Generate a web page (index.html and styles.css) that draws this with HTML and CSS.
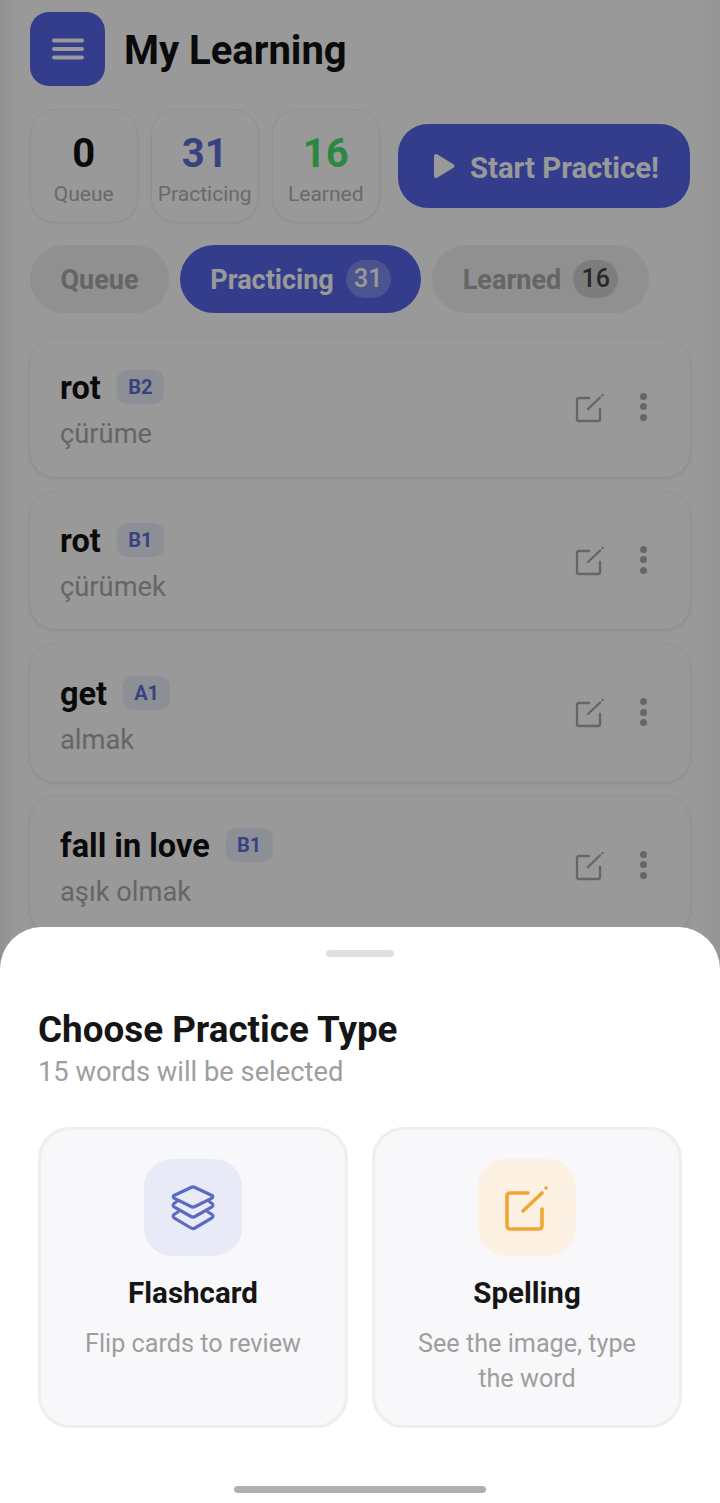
FILE: index.html
```html
<!DOCTYPE html>
<html lang="en">
<head>
  <meta charset="UTF-8">
  <meta name="viewport" content="width=device-width, initial-scale=1.0">
  <title>My Learning</title>
  <link rel="stylesheet" href="styles.css">
</head>
<body>

  <main class="page">
    <header class="top">
      <button class="menu-btn" aria-label="Menu">
        <svg width="32" height="24" viewBox="0 0 32 24"><path d="M2 3.500h28M2 12h28M2 20.500h28" stroke="#fff" stroke-width="4" stroke-linecap="round"/></svg>
      </button>
      <h1>My Learning</h1>
    </header>

    <section class="summary">
      <div class="stat"><strong>0</strong><span>Queue</span></div>
      <div class="stat"><strong class="blue">31</strong><span>Practicing</span></div>
      <div class="stat"><strong class="green">16</strong><span>Learned</span></div>
      <button class="start-btn">
        <svg width="22" height="26" viewBox="0 0 22 26"><path d="M1 3v20a2 2 0 0 0 3 1.700l16.500-10a2 2 0 0 0 0-3.400L4 1.300A2 2 0 0 0 1 3z" fill="#fff"/></svg>
        <span>Start Practice!</span>
      </button>
    </section>

    <nav class="tabs">
      <div class="tab tab-queue">Queue</div>
      <div class="tab tab-practicing active">Practicing <span class="count">31</span></div>
      <div class="tab tab-learned">Learned <span class="count">16</span></div>
    </nav>

    <section class="words">
      <article class="word">
        <div class="word-text">
          <div class="word-head"><b>rot</b><span class="level">B2</span></div>
          <p>çürüme</p>
        </div>
        <svg class="edit" width="30" height="30" viewBox="0 0 30 30"><path d="M14 4H4a2 2 0 0 0-2 2v19a2 2 0 0 0 2 2h19a2 2 0 0 0 2-2V15M13 15L25 3.500M27.500 1v0" fill="none" stroke="#aaa" stroke-width="2.400" stroke-linecap="round"/></svg>
        <span class="dots"><i></i><i></i><i></i></span>
      </article>
      <article class="word">
        <div class="word-text">
          <div class="word-head"><b>rot</b><span class="level">B1</span></div>
          <p>çürümek</p>
        </div>
        <svg class="edit" width="30" height="30" viewBox="0 0 30 30"><path d="M14 4H4a2 2 0 0 0-2 2v19a2 2 0 0 0 2 2h19a2 2 0 0 0 2-2V15M13 15L25 3.500M27.500 1v0" fill="none" stroke="#aaa" stroke-width="2.400" stroke-linecap="round"/></svg>
        <span class="dots"><i></i><i></i><i></i></span>
      </article>
      <article class="word">
        <div class="word-text">
          <div class="word-head"><b>get</b><span class="level">A1</span></div>
          <p>almak</p>
        </div>
        <svg class="edit" width="30" height="30" viewBox="0 0 30 30"><path d="M14 4H4a2 2 0 0 0-2 2v19a2 2 0 0 0 2 2h19a2 2 0 0 0 2-2V15M13 15L25 3.500M27.500 1v0" fill="none" stroke="#aaa" stroke-width="2.400" stroke-linecap="round"/></svg>
        <span class="dots"><i></i><i></i><i></i></span>
      </article>
      <article class="word">
        <div class="word-text">
          <div class="word-head"><b>fall in love</b><span class="level">B1</span></div>
          <p>aşık olmak</p>
        </div>
        <svg class="edit" width="30" height="30" viewBox="0 0 30 30"><path d="M14 4H4a2 2 0 0 0-2 2v19a2 2 0 0 0 2 2h19a2 2 0 0 0 2-2V15M13 15L25 3.500M27.500 1v0" fill="none" stroke="#aaa" stroke-width="2.400" stroke-linecap="round"/></svg>
        <span class="dots"><i></i><i></i><i></i></span>
      </article>
    </section>
  </main>

  <div class="scrim"></div>

  <aside class="sheet">
    <div class="handle"></div>
    <h2>Choose Practice Type</h2>
    <p class="sub">15 words will be selected</p>
    <div class="options">
      <div class="option">
        <div class="option-icon icon-blue">
          <svg width="46" height="46" viewBox="0 0 46 46" fill="none" stroke="#5c6bc0" stroke-width="3.200" stroke-linejoin="round" stroke-linecap="round"><path d="M21 2.500a4 4 0 0 1 4 0L42 10.500a1.500 1.500 0 0 1 0 2.600L25 21.500a4 4 0 0 1-4 0L4 13.100a1.500 1.500 0 0 1 0-2.600z"/><path d="M8 15.500L4 18.500a2 2 0 0 0 0 3.300L21 31.500a4 4 0 0 0 4 0L42 21.800a2 2 0 0 0 0-3.300L38 15.500"/><path d="M8 27L4 29.500a2 2 0 0 0 0 3.300L21 43a4 4 0 0 0 4 0L42 32.800a2 2 0 0 0 0-3.300L38 27"/></svg>
        </div>
        <h3>Flashcard</h3>
        <p>Flip cards to review</p>
      </div>
      <div class="option">
        <div class="option-icon icon-orange">
          <svg width="46" height="46" viewBox="0 0 46 46" fill="none" stroke="#f2a533" stroke-width="3.600" stroke-linecap="round"><path d="M24 8H6a3 3 0 0 0-3 3v30a3 3 0 0 0 3 3h29a3 3 0 0 0 3-3V24M19 26L38 8M42 3v0"/></svg>
        </div>
        <h3>Spelling</h3>
        <p>See the image, type the word</p>
      </div>
    </div>
    <div class="home-bar"></div>
  </aside>

</body>
</html>
```

FILE: styles.css
```css
* {
  box-sizing: border-box;
}

html, body {
  margin: 0;
  padding: 0;
  height: 1503px;
  overflow: hidden;
}

body {
  position: relative;
  font-family: Roboto, "Liberation Sans", sans-serif;
  background-color: #ffffff;
  color: #111;
}

.page {
  padding: 12px 30px 0;
}

.top {
  display: flex;
  align-items: center;
  gap: 19px;
}

.menu-btn {
  display: flex;
  align-items: center;
  justify-content: center;
  width: 75px;
  height: 74px;
  padding: 0;
  border: 0;
  border-radius: 19px;
  background-color: #5566e8;
}

h1 {
  margin: 0;
  padding-top: 3px;
  font-size: 40px;
  font-weight: 700;
}

.summary {
  display: flex;
  align-items: center;
  margin-top: 23px;
}

.stat {
  display: flex;
  flex-direction: column;
  align-items: center;
  width: 107.500px;
  height: 114px;
  margin-right: 13.500px;
  padding-top: 21px;
  border: 1.500px solid #f0f0f0;
  border-radius: 26px;
  background-color: #fff;
  box-shadow: 0 1px 3px rgba(0, 0, 0, 0.05);
}

.stat strong {
  font-size: 40px;
  line-height: 46px;
}

.stat span {
  margin-top: 4px;
  font-size: 21px;
  line-height: 26px;
  color: #b0b0b0;
  white-space: nowrap;
}

.blue {
  color: #5f6ed8;
}

.green {
  color: #4ce36a;
}

.start-btn {
  display: flex;
  align-items: center;
  justify-content: center;
  gap: 15px;
  width: 292px;
  height: 84px;
  margin-left: 5px;
  padding: 0 0 0 4px;
  border: 0;
  border-radius: 30px;
  background-color: #5566e8;
  color: #fff;
  font-family: inherit;
  font-size: 29.300px;
  font-weight: 700;
}

.start-btn span {
  padding-top: 3px;
}

.tabs {
  display: flex;
  gap: 11px;
  margin-top: 22px;
}

.tab {
  display: flex;
  align-items: center;
  justify-content: center;
  gap: 12px;
  height: 68px;
  padding-top: 1px;
  border-radius: 34px;
  background-color: #f0f0f0;
  color: #a8a8a8;
  font-size: 27px;
  font-weight: 700;
}

.tab-queue {
  width: 139px;
}

.tab-practicing {
  width: 241px;
}

.tab-learned {
  width: 217px;
}

.tab.active {
  background-color: #5566e8;
  color: #fff;
}

.count {
  width: 45px;
  height: 38px;
  margin-top: -1px;
  border-radius: 19px;
  background-color: #d0d0d0;
  color: #444;
  font-size: 25px;
  font-weight: 500;
  line-height: 38px;
  text-align: center;
}

.active .count {
  background-color: rgba(255, 255, 255, 0.25);
  color: #fff;
}

.words {
  display: flex;
  flex-direction: column;
  gap: 15px;
  margin-top: 26px;
}

.word {
  display: flex;
  align-items: center;
  height: 137.700px;
  padding: 0 43.500px 0 30px;
  border-radius: 26px;
  background-color: #fff;
  box-shadow: 0 1px 4px rgba(0, 0, 0, 0.12);
}

.word-text {
  flex: 1;
  padding-top: 4px;
}

.word-head {
  display: flex;
  align-items: center;
  gap: 17px;
}

.word-head b {
  font-size: 32.500px;
  font-weight: 700;
}

.level {
  width: 47px;
  height: 34px;
  margin: -2px 0 0 -1px;
  border-radius: 10px;
  background-color: #eceefa;
  color: #5f6ed8;
  font-size: 20px;
  font-weight: 700;
  line-height: 34px;
  text-align: center;
}

.word-text p {
  margin: 11px 0 0;
  font-size: 27.300px;
  line-height: 32px;
  color: #aaa;
}

.edit {
  margin: 2px 34.500px 0 0;
}

.dots {
  display: flex;
  flex-direction: column;
  gap: 3.500px;
  margin-bottom: 2px;
}

.dots i {
  width: 7px;
  height: 7px;
  border-radius: 50%;
  background-color: #aaa;
}

.scrim {
  position: absolute;
  inset: 0;
  background:
    linear-gradient(to right, rgba(0, 0, 0, 0.05), transparent 22px, transparent 700px, rgba(0, 0, 0, 0.03)),
    rgba(0, 0, 0, 0.4);
}

.sheet {
  position: absolute;
  left: 0;
  right: 0;
  bottom: 0;
  height: 576px;
  padding: 23px 38px 0;
  border-radius: 42px 42px 0 0;
  background-color: #fff;
}

.handle {
  width: 68px;
  height: 7px;
  margin: 0 auto;
  border-radius: 4px;
  background-color: #e0e0e0;
}

.sheet h2 {
  margin: 52px 0 0;
  font-size: 36.800px;
  font-weight: 700;
  line-height: 42px;
  color: #151515;
}

.sub {
  margin: 5px 0 0;
  font-size: 27.300px;
  line-height: 32px;
  color: #9e9e9e;
}

.options {
  display: flex;
  gap: 24px;
  margin-top: 39px;
}

.option {
  flex: 1;
  height: 301px;
  padding: 29px 24px 0;
  border: 3px solid #eeeeee;
  border-radius: 32px;
  background-color: #f8f8fa;
  text-align: center;
}

.option-icon {
  display: flex;
  align-items: center;
  justify-content: center;
  width: 98px;
  height: 97px;
  margin: 0 auto;
  border-radius: 28px;
}

.icon-blue {
  background-color: #e9eaf7;
}

.icon-orange {
  background-color: #fcf1e3;
}

.option h3 {
  margin: 20px 0 0;
  font-size: 29.500px;
  font-weight: 700;
  line-height: 34px;
  color: #151515;
}

.option p {
  margin: 16px 0 0;
  font-size: 25.200px;
  line-height: 35px;
  color: #9e9e9e;
}

.home-bar {
  position: absolute;
  left: 234px;
  bottom: 10px;
  width: 252px;
  height: 7px;
  border-radius: 4px;
  background-color: #b0b0b0;
}
```
